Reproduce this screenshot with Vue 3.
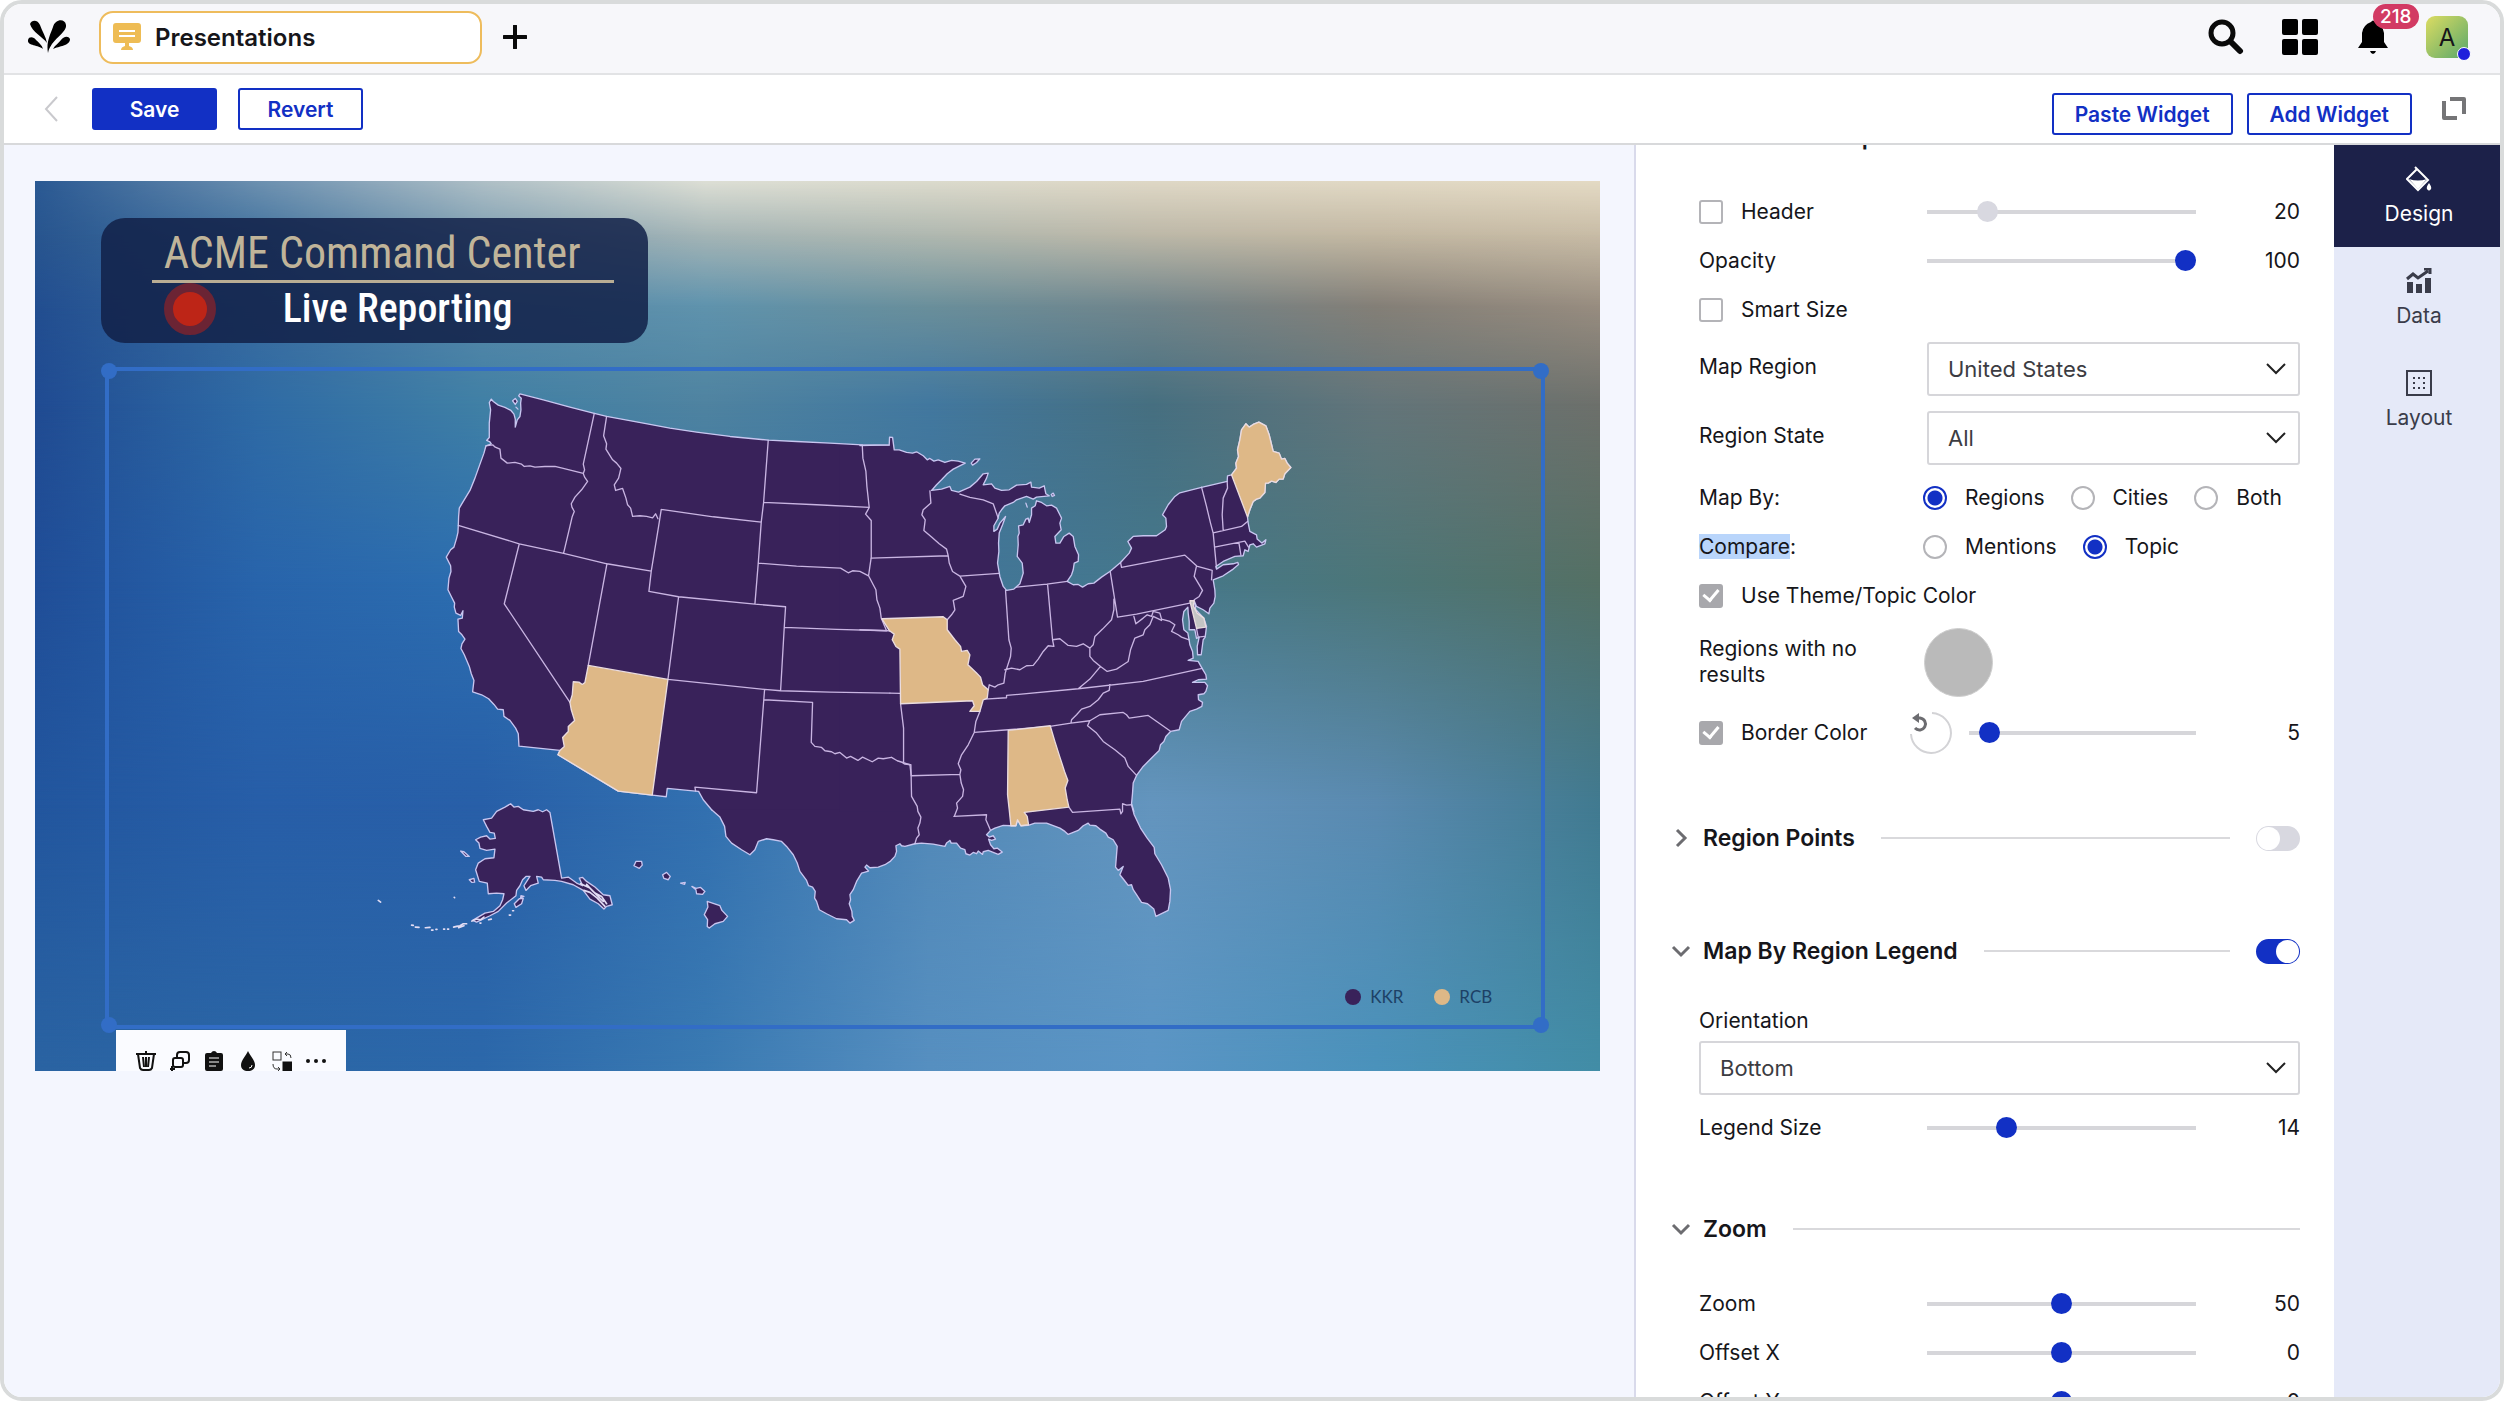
<script setup>
import { ref, computed } from 'vue'

// === top bar ===
const tabName = ref('Presentations')
const notifCount = ref(218)

// === side tabs ===
const activeTab = ref('Design')
const sideTabs = ['Design', 'Data', 'Layout']

// === settings ===
const header = ref(false)
const headerSize = ref(20)
const opacity = ref(100)
const smartSize = ref(false)
const mapRegion = ref('United States')
const regionState = ref('All')
const mapBy = ref('Regions')
const compare = ref('Topic')
const useTheme = ref(true)
const borderColor = ref(true)
const borderSize = ref(5)
const regionPoints = ref(false)
const regionLegend = ref(true)
const orientation = ref('Bottom')
const legendSize = ref(14)
const zoomRows = ref([
  { id: 'zoom', label: 'Zoom', value: 50, min: 0, max: 100 },
  { id: 'offset-x', label: 'Offset X', value: 0, min: -100, max: 100 },
  { id: 'offset-y', label: 'Offset Y', value: 0, min: -100, max: 100 },
])

// === backdrop: every row fades into the next one ===
const backdropRows = [
  { y: 0, colors: ['#2a5993', '#6c90b0', '#aebfc6', '#dddfd5', '#dcdbcd', '#dfd8c6', '#e1d9c5', '#e4dac4'] },
  { y: 6, colors: ['#28558f', '#45759f', '#7f9fb2', '#a5b5b6', '#b0b8b0', '#bdb8a8', '#c3b8a3', '#c8bca6'] },
  { y: 14, colors: ['#224e90', '#3a6c9e', '#5787a8', '#5f93ad', '#6a8f9b', '#71858b', '#847f77', '#988d80'] },
  { y: 25, colors: ['#204b92', '#2f6ba5', '#4080a5', '#4f83a0', '#42789f', '#466f80', '#63757a', '#6d706b'] },
  { y: 45, colors: ['#204e98', '#2864ab', '#2c6eb0', '#3474a8', '#41759a', '#45788c', '#4c7678', '#547064'] },
  { y: 70, colors: ['#22569e', '#275ea8', '#285fa8', '#3270b0', '#5289b8', '#6495be', '#5a8ab0', '#417a90'] },
  { y: 100, colors: ['#2a63a2', '#2b66a5', '#2c68aa', '#3a7ab2', '#568fc0', '#5a95c5', '#4a92bb', '#428da6'] },
]
const backdrop = computed(() =>
  backdropRows.map((row, i) => ({
    background: `linear-gradient(to right, ${row.colors.join(', ')})`,
    maskImage: i === 0
      ? 'none'
      : `linear-gradient(to bottom, transparent ${backdropRows[i - 1].y}%, #000 ${row.y}%)`,
  }))
)

// === map ===
const legend = [
  { name: 'KKR', color: '#39225a' },
  { name: 'RCB', color: '#deb887' },
]

const westCoast = 'M845 1320 820 1290 806 1265 797 1264 712 1256 709 1281 667 1276 565 1264 384 1155 390 1142 267 1129 265 1092 257 1075 240 1052 222 1040 220 1020 203 1018 192 1004 176 987 155 975 128 966 132 932 124 912 118 890 103 855 93 836 96 822 105 808 96 795 86 785 84 748 97 745 99 723 92 737 78 730 73 712 74 700 64 680 54 660 57 625 63 605 62 588 49 562 62 540 72 532 80 505 84 488 85 467 86 440 88 415 100 395 120 362 135 325 150 283 162 250 168 228 184 222 180 216 170 212 178 203 178 160 182 120 178 98 184 88 190 95 205 106 225 113 243 122 252 133 256 148 256 172 262 150 270 140 273 120 272 100 274 85 266 78 270 72 340 90 420 112 493 131 530 140 640 160 720 175 800 187 900 200 1015 211 1100 215 1200 220 1297 225 1378 226'
const eastCoast = 'M0 137 88 135 89 112 98 113 103 150 118 150 140 158 158 160 170 156 190 168 202 180 210 176 222 184 235 180 255 188 275 182 295 184 316 190 280 208 262 222 245 240 230 255 215 272 245 268 270 260 275 272 296 277 330 262 350 245 370 222 385 220 380 235 370 255 395 252 405 265 425 272 448 270 470 256 500 254 513 247 515 262 538 265 553 258 558 282 568 288 530 292 520 298 500 290 470 300 460 308 435 318 425 330 418 340 414 357 402 378 402 395 412 388 420 370 437 350 428 375 418 400 416 430 417 455 413 490 420 530 430 560 440 572 462 568 480 552 490 520 487 490 472 470 475 435 474 410 478 400 476 378 490 375 498 358 505 355 508 368 515 345 515 325 526 318 530 303 545 308 560 318 575 316 590 325 600 345 605 355 600 370 604 390 585 410 588 430 600 430 612 410 628 400 640 410 645 440 656 465 655 485 643 490 640 510 635 525 622 545 640 555 655 554 668 562 685 552 702 550 725 532 750 515 782 488 808 460 815 445 804 425 820 410 850 408 890 408 916 390 920 380 918 355 908 345 925 315 945 290 960 279 1025 263 1102 245 1103 228 1115 225 1130 205 1128 190 1136 170 1133 150 1140 120 1145 90 1158 72 1168 82 1180 74 1197 67 1218 78 1228 105 1240 155 1258 160 1265 178 1275 176 1282 190 1293 203 1275 222 1270 238 1258 238 1248 248 1235 244 1225 250 1217 250 1215 278 1200 295 1190 298 1180 305 1170 330 1163 352 1165 370 1170 395 1190 405 1192 418 1206 430 1218 420 1215 432 1190 442 1180 432 1170 435 1165 455 1155 450 1150 468 1125 470 1090 485 1068 500 1070 508 1090 495 1120 492 1134 488 1136 494 1120 508 1090 528 1060 540 1065 570 1066 590 1062 610 1050 625 1047 642 1030 630 1010 620 1003 603 1008 630 1032 655 1040 680 1036 712 1030 720 1024 765 1013 765 1012 740 1018 712 1010 716 1005 690 988 690 988 665 985 640 984 622 972 635 968 660 972 690 984 700 988 722 990 735 998 755 1000 775 985 782 1015 785 1028 808 1038 825 1040 838 1015 840 998 848 1035 848 1043 858 1038 875 1032 882 1015 885 1016 900 1028 908 1026 920 1010 928 990 935 965 965 958 990 932 995 918 1010 912 1025 902 1035 898 1052 885 1065 870 1080 850 1100 830 1127 820 1150 818 1180 815 1212 822 1235'
const southCoast = 'M1235 315 1243 345 1262 385 1282 415 1303 443 1305 462 1325 495 1345 535 1352 570 1350 605 1345 632 1308 650 1302 628 1283 612 1265 608 1250 585 1240 570 1235 555 1225 557 1212 540 1200 525 1210 500 1195 512 1187 502 1188 490 1192 440 1180 420 1165 412 1158 400 1140 388 1128 378 1110 376 1105 370 1090 378 1075 392 1045 404 1035 395 1020 385 980 370 945 370 925 377 903 378 893 360 888 378 873 378 850 377 825 385 812 392 800 405 808 412 820 408 827 418 815 422 806 418 812 435 822 447 832 445 847 457 835 464 805 452 790 456 788 464 775 454 770 462 760 458 750 466 738 462 735 450 722 445 710 430 694 430 690 422 680 430 675 440 640 433 605 430 585 432 555 440 545 438 540 432 528 438 530 455 525 470 512 484 495 495 475 502 450 504 440 496 435 502 446 514 425 520 410 545 400 570 390 585 392 600 388 612 396 635 397 650 403 662 390 670 380 660 350 657 320 642 298 630 290 605 284 595 286 575 278 562 266 558 260 542 240 515 232 490 220 465 200 440 185 425 160 420 140 417 115 425 105 450 90 465 65 450 35 430 18 410 14 380 0 352 -25 330'

// one sheet per corner of the country, x/y is where the sheet starts
const sheets = [
  {
    name: 'south', x: 870, y: 990,
    land: southCoast + ' -50 300 -50 0 1230 0Z',
    coast: southCoast,
    borders: 'M550 190 555 193 573 195 575 290 592 320 594 335 603 352 600 370 594 385 598 405 590 415 585 432M702 350 800 345 798 360 806 378 812 392M1047 322 1058 338 1200 328 1203 342 1208 335 1208 312 1220 316 1235 315',
  },
  {
    name: 'west', x: 0, y: 0,
    land: westCoast + ' 1378 1320Z',
    coast: westCoast,
    borders: 'M168 228 188 225 196 232 210 238 213 265 232 280 255 278 275 283 283 290 300 288 315 292 345 290 375 290 400 296 460 311M493 131 460 283 464 300 460 311 464 322 473 335 455 360 435 382 424 402 426 412 433 425 427 440 420 470 401 550M530 140 521 198 530 222 528 238 548 270 560 280 573 296 566 325 553 345 557 362 578 356 588 385 593 405 602 415 608 440 630 438 650 440 668 444 677 432 684 447M694 419 686 470 664 604 657 665 746 681 975 703 1067 711 1063 773 1052 963M85 467 268 522 401 551 531 582 664 604M268 522 223 702 420 998M531 582 475 887M746 681 714 929M714 929 1004 959 1052 963 1200 967 1380 970M694 419 850 441 994 457M1015 211 1001 398 994 457 985 580 975 703M1001 398 1160 405 1318 413M985 580 1100 589 1232 595 1255 609 1268 603 1290 605 1316 618M1063 773 1220 779 1370 783M1297 225 1299 265 1308 305 1311 350 1318 413 1307 433 1324 452 1324 563 1320 590 1316 618 1330 645 1338 660 1341 690 1350 715 1354 745 1370 783M1004 959 980 1269 795 1252 797 1264M1003 990 1148 998 1144 1118 1155 1130 1175 1133 1185 1143 1205 1146 1215 1152 1230 1148 1250 1165 1262 1160 1284 1172 1298 1162 1327 1176 1345 1165 1360 1167 1385 1163',
  },
  {
    name: 'east', x: 1290, y: 90,
    land: eastCoast + ' -60 1235 -60 137Z',
    coast: eastCoast,
    borders: 'M210 273 213 310 190 330 186 345 196 360 192 392 215 412 238 432 260 448 265 468 268 490 278 515 300 529 318 560 310 590 280 602 285 630 275 645 262 660M34 475 265 468M300 529 418 521M78 692 90 694M0 690 85 693M90 880 120 881M122 912 131 985 131 1090M95 1073 112 1083 131 1089 150 1095 154 1128 300 1124M360 935 348 965 343 998 325 1035 305 1065 295 1092 303 1110 300 1124 304 1150 311 1170 308 1190 290 1210 293 1225 284 1248M385 870 388 855 405 862 415 855 432 850 436 820 452 770 454 745 447 720 437 572M435 810 455 805 480 810 500 798 520 797 535 778 550 755 565 738 582 740 578 720 563 553M470 562 561 553 622 545M578 720 600 717 625 737 650 740 670 732 690 745 700 735 705 710 728 688 755 660 762 630 762 598M751 515 773 652 830 643 990 610M690 745 690 770 700 782 722 800 690 838 655 867M375 898 440 894 440 887 655 867 850 845 1027 806M750 855 748 872 730 880 715 900 690 920 665 928 650 945 635 960 633 970M343 998 445 990 570 980 633 970 690 963M722 800 742 815 770 808 790 795 805 785 812 750 825 715 850 705 855 690 870 675 880 650 905 662M822 650 828 672 850 655 862 645 875 650 880 635 900 640 905 658 930 665 945 675 935 695 955 705 965 712 988 720M782 488 785 503 975 466 990 480 1010 498 1003 530 1028 572 1018 590 1003 600M1013 500 1057 512 1055 540M1025 262 1040 320 1052 370 1060 400 1070 505M1102 245 1103 265 1090 295 1087 345 1090 392M1060 399 1145 380 1163 365M1064 442 1140 427 1155 424 1166 442M1137 428 1143 465M300 283 330 293 370 300 400 312 408 335 415 355M690 963 683 978 710 1000 730 1025 765 1050 795 1075 805 1100 830 1127M690 963 720 945 790 938 800 945 808 955 865 947 930 993M1010 686 1015 712 1034 710',
  },
]

const highlights = [
  { name: 'Arizona', x: 0, y: 0, color: '#deb887', d: 'M475 887 714 929 667 1276 565 1264 384 1155 390 1142 403 1130 398 1103 415 1085 415 1070 434 1052 424 1020 420 998 427 975 430 936 447 937 457 944 465 938Z' },
  { name: 'Missouri', x: 1290, y: 90, color: '#deb887', d: 'M66 657 250 651 262 660 262 690 285 720 302 740 305 755 322 752 330 765 324 795 350 820 362 832 368 855 385 870 382 895 370 900 360 935 330 935 343 918 338 903 122 912 120 748 108 740 97 720 103 703 88 692Z' },
  { name: 'Maine', x: 1290, y: 90, color: '#deb887', d: 'M1115 225 1130 205 1128 190 1136 170 1133 150 1140 120 1145 90 1158 72 1168 82 1180 74 1197 67 1218 78 1228 105 1240 155 1258 160 1265 178 1275 176 1282 190 1293 203 1275 222 1270 238 1258 238 1248 248 1235 244 1225 250 1217 250 1215 278 1200 295 1190 298 1180 305 1170 330 1163 352Z' },
  { name: 'Delaware', x: 1290, y: 90, color: '#c4c4c4', d: 'M990 603 1003 603 1000 618 1012 640 1032 655 1038 682 1010 686Z' },
  { name: 'Alabama', x: 870, y: 990, color: '#deb887', d: 'M865 92 991 78 1005 125 1020 172 1034 215 1044 242 1036 265 1042 300 1047 322 913 338 922 350 926 375 903 378 893 360 888 378 873 378 868 330 863 285Z' },
]

const alaska = 'M435 142 452 132 462 142 475 140 490 150 520 155 535 150 548 156 560 150 570 158 605 355 625 352 650 370 668 378 658 355 668 353 680 365 705 382 730 405 750 408 757 435 740 440 732 448 715 432 690 418 670 392 640 375 605 365 585 362 550 360 545 352 530 350 535 370 512 378 498 392 492 378 510 350 498 350 488 360 480 378 470 392 468 408 440 430 415 455 390 468 350 487 338 482 375 460 400 455 420 438 428 420 432 402 410 400 385 402 382 370 358 365 347 330 355 310 375 297 402 294 405 268 380 272 360 266 357 250 347 240 362 232 380 228 390 238 406 236 403 220 390 218 380 200 370 180 395 175 410 155Z'
const islands = 'M463 432 478 417 490 416 485 432 468 443ZM328 360 342 356 344 367 336 368ZM302 274 312 276 328 290 318 290ZM483 408 492 410 482 414ZM822 318 828 305 845 305 847 316 838 326ZM908 345 920 338 931 350 925 360 912 356ZM962 370 976 368 974 374ZM996 380 1008 386 1022 383 1035 395 1028 404 1010 402 1008 390ZM1042 425 1080 438 1086 452 1103 470 1090 485 1065 492 1048 505 1042 500 1043 480 1033 465 1044 442Z'
const channels = 'M662 372 690 385 705 400 725 410 740 432M672 392 690 398 712 415 735 440M680 374 700 396 730 425M55 422 62 427M155 496 160 497M166 502 177 503M196 504 210 503M215 511 219 511M228 509 231 509M251 508 254 508M263 508 266 508M281 502 290 500 300 498 310 492 320 492M296 504 312 498M336 484 350 478 362 480 372 472M386 480 394 478M448 466 452 466M458 453 461 453M283 413 284 414M360 490 363 490'
</script>

<template>
  <div class="app">
    <header class="topbar">
      <a href="#" class="logo" aria-label="Home">
        <svg viewBox="0 0 44 36" width="44" height="36">
          <path d="M3 5C5 0 11 1 13 6C15 12 19 18 20 24C16 18 5 13 3 5Z" />
          <path d="M26 8C28 0 38 -1 39 6C40 14 24 20 21 34C19 24 23 16 26 8Z" />
          <path d="M1 21C2 17 7 18 9 21C12 24 15 26 16 30C12 26 0 27 1 21Z" />
          <path d="M43 20C41 16 36 18 34 21C32 24 28 26 26 30C32 27 43 27 43 20Z" />
        </svg>
      </a>
      <button class="tab">
        <svg viewBox="0 0 28 28" width="28" height="28">
          <path d="M3 0H25Q28 0 28 3V17Q28 20 25 20H16V23Q20 24 20 27H8Q8 24 12 23V20H3Q0 20 0 17V3Q0 0 3 0Z" fill="#eebc54" />
          <path d="M6 8H22M6 13H22" stroke="#fff" stroke-width="2" />
        </svg>
        {{ tabName }}
      </button>
      <button class="plain plus" aria-label="New tab">
        <svg viewBox="0 0 24 24" width="24" height="24"><path d="M12 1V23M1 12H23" stroke="#0a0a0a" stroke-width="4" stroke-linecap="round" /></svg>
      </button>
      <nav class="top-icons">
        <button class="plain" aria-label="Search">
          <svg viewBox="0 0 36 36" width="36" height="36" fill="none" stroke="#0a0a0a" stroke-linecap="round">
            <circle cx="14" cy="14" r="11" stroke-width="5" /><path d="M23 23 32 32" stroke-width="6" />
          </svg>
        </button>
        <button class="plain" aria-label="Apps">
          <svg viewBox="0 0 36 36" width="36" height="36">
            <rect width="16" height="16" rx="2" /><rect x="20" width="16" height="16" rx="2" />
            <rect y="20" width="16" height="16" rx="2" /><rect x="20" y="20" width="16" height="16" rx="2" />
          </svg>
        </button>
        <button class="plain bell" aria-label="Notifications">
          <svg viewBox="0 0 30 34" width="30" height="34">
            <path d="M13 2Q15 -1 17 2Q25 5 26 13V22L30 28H0L4 22V13Q5 5 13 2ZM12 31H18Q17 34 15 34Q13 34 12 31Z" />
          </svg>
          <span class="badge">{{ notifCount }}</span>
        </button>
        <button class="avatar">A<span class="online"></span></button>
      </nav>
    </header>

    <div class="toolbar">
      <button class="plain back" aria-label="Back">
        <svg viewBox="0 0 14 26" width="14" height="26" fill="none" stroke="#c9c9cd" stroke-width="2"><path d="M13 1 2 13 13 25" /></svg>
      </button>
      <button class="btn primary">Save</button>
      <button class="btn">Revert</button>
      <div class="widget-actions">
        <button class="btn wide">Paste Widget</button>
        <button class="btn wide">Add Widget</button>
      </div>
      <button class="plain" aria-label="Expand">
        <svg viewBox="0 0 26 26" width="26" height="26" fill="none" stroke="#757577" stroke-width="4" stroke-linejoin="round"><path d="M9 3H23V18M3 5V22H16" /></svg>
      </button>
    </div>

    <div class="workspace">
      <main class="stage">
        <div class="canvas">
          <div v-for="(layer, i) in backdrop" :key="i" class="backdrop" :style="layer"></div>

          <div class="title-card">
            <h1>ACME Command Center</h1>
            <div class="live">
              <span class="dot"></span>
              <h2>Live Reporting</h2>
            </div>
          </div>

          <div class="map-widget">
            <svg class="map" viewBox="-963 9 4296 1951" role="img" aria-label="Map of the United States">
              <g v-for="s in sheets" :key="s.name" :transform="`translate(${s.x} ${s.y})`">
                <path :d="s.land" class="land" />
              </g>
              <g v-for="s in sheets" :key="s.name + '-lines'" :transform="`translate(${s.x} ${s.y})`">
                <path :d="s.borders" class="border-line" />
                <path :d="s.coast" class="coast-line" />
              </g>
              <path
                v-for="h in highlights"
                :key="h.name"
                :d="h.d"
                :fill="h.color"
                :transform="`translate(${h.x} ${h.y})`"
                class="state"
              />
              <path d="M248 93 256 86 262 95 256 104ZM258 112 264 118" class="isle" />
              <path d="M334 190 345 178 360 177 350 188 338 196ZM498 310 502 322M574 284 580 280 584 287 577 290Z" transform="translate(1290 90)" class="isle" />
              <g transform="translate(-210 1170)">
                <path :d="alaska" class="isle" />
                <path :d="islands" class="isle" />
                <path :d="channels" class="channel" />
              </g>
            </svg>
            <ul class="legend">
              <li v-for="item in legend" :key="item.name">
                <svg viewBox="0 0 16 16" width="16" height="16"><circle cx="8" cy="8" r="8" :fill="item.color" /></svg>
                {{ item.name }}
              </li>
            </ul>
            <span class="handle tl"></span>
            <span class="handle tr"></span>
            <span class="handle bl"></span>
            <span class="handle br"></span>
          </div>

          <div class="widget-menu">
            <button class="plain" aria-label="Delete">
              <svg viewBox="0 0 20 20" width="20" height="20" fill="none" stroke="#111" stroke-width="2"><path d="M0 3H20M10 0V3M2 3 4 17Q5 19 7 19H13Q15 19 16 17L18 3M7 6 8 16M10 6V16M13 6 12 16" /></svg>
            </button>
            <button class="plain" aria-label="Duplicate">
              <svg viewBox="0 0 20 20" width="20" height="20" fill="none" stroke="#111" stroke-width="2"><path d="M7 6V4Q7 1 10 1H16Q19 1 19 4V9Q19 12 16 12H14" /><rect x="3" y="7" width="10" height="9" rx="2" /><path d="M2 15V20M0 18H5" /></svg>
            </button>
            <button class="plain" aria-label="Copy">
              <svg viewBox="0 0 20 20" width="20" height="20"><path d="M3 2H7Q8 0 10 0Q12 0 13 2H17Q19 2 19 4V18Q19 20 17 20H3Q1 20 1 18V4Q1 2 3 2Z" fill="#111" /><path d="M5 7H15M5 11H15M5 15H12" stroke="#fff" /></svg>
            </button>
            <button class="plain" aria-label="Color">
              <svg viewBox="0 0 20 20" width="20" height="20"><path d="M10 0C12 5 17 9 17 14C17 18 14 20 10 20C6 20 3 18 3 14C3 9 8 5 10 0Z" fill="#111" /><path d="M14 14Q14 17 11 17" stroke="#fff" fill="none" /></svg>
            </button>
            <button class="plain" aria-label="Swap">
              <svg viewBox="0 0 20 20" width="20" height="20" fill="none" stroke="#333"><rect x="1" y="1" width="8" height="8" /><rect x="11" y="11" width="9" height="9" fill="#111" stroke="#111" /><path d="M13 3H16Q19 3 19 7M15 1 13 3 15 5M1 13Q1 18 5 18H8M6 16 8 18 6 20" /></svg>
            </button>
            <button class="plain" aria-label="More">
              <svg viewBox="0 0 20 20" width="20" height="20" fill="#111"><circle cx="2" cy="10" r="2" /><circle cx="10" cy="10" r="2" /><circle cx="18" cy="10" r="2" /></svg>
            </button>
          </div>
        </div>
      </main>

      <aside class="panel">
        <section class="section first">
          <h3 class="section-head">Customize Map</h3>
          <div class="row">
            <label class="check"><input type="checkbox" v-model="header" />Header</label>
            <input type="range" v-model="headerSize" min="0" max="100" aria-label="Header size" class="muted" />
            <output>{{ headerSize }}</output>
          </div>
          <div class="row">
            <label for="opacity">Opacity</label>
            <input id="opacity" type="range" v-model="opacity" min="0" max="100" />
            <output>{{ opacity }}</output>
          </div>
          <div class="row">
            <label class="check"><input type="checkbox" v-model="smartSize" />Smart Size</label>
          </div>
          <div class="row select-row">
            <label for="map-region">Map Region</label>
            <div class="select">
              <select id="map-region" v-model="mapRegion"><option>United States</option></select>
              <svg viewBox="0 0 20 12" width="20" height="12"><path d="M1 1 10 10 19 1" /></svg>
            </div>
          </div>
          <div class="row select-row">
            <label for="region-state">Region State</label>
            <div class="select">
              <select id="region-state" v-model="regionState"><option>All</option></select>
              <svg viewBox="0 0 20 12" width="20" height="12"><path d="M1 1 10 10 19 1" /></svg>
            </div>
          </div>
          <div class="row radio-row">
            <span>Map By:</span>
            <div class="radios">
              <label v-for="opt in ['Regions', 'Cities', 'Both']" :key="opt">
                <input type="radio" name="map-by" :value="opt" v-model="mapBy" />{{ opt }}
              </label>
            </div>
          </div>
          <div class="row radio-row">
            <span><mark>Compare</mark>:</span>
            <div class="radios">
              <label v-for="opt in ['Mentions', 'Topic']" :key="opt">
                <input type="radio" name="compare" :value="opt" v-model="compare" />{{ opt }}
              </label>
            </div>
          </div>
          <div class="row">
            <label class="check full"><input type="checkbox" v-model="useTheme" />Use Theme/Topic Color</label>
          </div>
          <div class="row swatch-row">
            <span class="two-line">Regions with no results</span>
            <button class="swatch" aria-label="Regions with no results color"></button>
          </div>
          <div class="row border-row">
            <label class="check"><input type="checkbox" v-model="borderColor" />Border Color</label>
            <div class="border-size">
              <button class="plain" aria-label="Reset border color">
                <svg viewBox="0 0 42 42" width="42" height="42" fill="none">
                  <path d="M22 1A20 20 0 1 1 1 22" stroke="#d3d3d6" stroke-width="2" />
                  <path d="M5 6H10A6 6 0 1 1 5 16" stroke="#6c6c70" stroke-width="3" />
                  <path d="M9 1V11L2 6Z" fill="#6c6c70" />
                </svg>
              </button>
              <input type="range" v-model="borderSize" min="0" max="100" aria-label="Border size" />
            </div>
            <output>{{ borderSize }}</output>
          </div>
        </section>

        <section class="section closed">
          <h3 class="section-head">
            <svg viewBox="0 0 16 20" width="16" height="20"><path d="M4 2 12 10 4 18" /></svg>
            Region Points
            <span class="rule"></span>
            <input type="checkbox" class="switch" v-model="regionPoints" aria-label="Region Points" />
          </h3>
        </section>

        <section class="section">
          <h3 class="section-head">
            <svg viewBox="0 0 16 20" width="16" height="20"><path d="M0 6 8 14 16 6" /></svg>
            Map By Region Legend
            <span class="rule"></span>
            <input type="checkbox" class="switch" v-model="regionLegend" aria-label="Map By Region Legend" />
          </h3>
          <label for="orientation" class="stacked">Orientation</label>
          <div class="select">
            <select id="orientation" v-model="orientation"><option>Bottom</option></select>
            <svg viewBox="0 0 20 12" width="20" height="12"><path d="M1 1 10 10 19 1" /></svg>
          </div>
          <div class="row after-select">
            <label for="legend-size">Legend Size</label>
            <input id="legend-size" type="range" v-model="legendSize" min="0" max="50" />
            <output>{{ legendSize }}</output>
          </div>
        </section>

        <section class="section">
          <h3 class="section-head">
            <svg viewBox="0 0 16 20" width="16" height="20"><path d="M0 6 8 14 16 6" /></svg>
            Zoom
            <span class="rule long"></span>
          </h3>
          <div v-for="row in zoomRows" :key="row.id" class="row">
            <label :for="row.id">{{ row.label }}</label>
            <input :id="row.id" type="range" v-model="row.value" :min="row.min" :max="row.max" />
            <output>{{ row.value }}</output>
          </div>
        </section>
      </aside>

      <nav class="side-tabs">
        <button
          v-for="tab in sideTabs"
          :key="tab"
          :class="{ active: activeTab === tab }"
          @click="activeTab = tab"
        >
          <svg v-if="tab === 'Design'" viewBox="0 0 26 26" width="26" height="26">
            <path d="M9 1 22 14 12 24 1 13 11 3" fill="none" stroke="currentColor" stroke-width="2" />
            <path d="M3 13Q12 16 21 13L12 23Z" fill="currentColor" />
            <path d="M23 17Q26 21 25 23Q23 26 21 23Q20 21 23 17Z" fill="currentColor" />
          </svg>
          <svg v-else-if="tab === 'Data'" viewBox="0 0 26 26" width="26" height="26">
            <path d="M1 14H7V25H1ZM10 16H16V25H10ZM19 10H25V25H19Z" fill="currentColor" />
            <path d="M1 11 7 6 12 10 22 3M18 1H24V6" fill="none" stroke="currentColor" stroke-width="3" />
          </svg>
          <svg v-else viewBox="0 0 26 26" width="26" height="26" fill="none" stroke="currentColor">
            <rect x="1" y="1" width="24" height="24" stroke-width="2" />
            <path d="M7 8H20M7 18H20M8 7V20M18 7V20" stroke-width="2" stroke-dasharray="2 3" />
          </svg>
          {{ tab }}
        </button>
      </nav>
    </div>
  </div>
</template>

<style>
body {
  background: #fff;
}
</style>

<style scoped>
* {
  box-sizing: border-box;
}
.app {
  height: 100vh;
  display: flex;
  flex-direction: column;
  border: 4px solid #d9dbdb;
  border-radius: 22px;
  overflow: hidden;
  background: #fff;
  font-family: Inter, "Liberation Sans", sans-serif;
  font-size: 21px;
  color: #16161a;
}
button {
  font: inherit;
  color: inherit;
  cursor: pointer;
}
.plain {
  display: block;
  padding: 0;
  border: none;
  background: none;
}
svg {
  display: block;
}

/* top bar */
.topbar {
  display: flex;
  align-items: center;
  height: 71px;
  padding: 0 32px 3px 23px;
  background: #f7f7fa;
  border-bottom: 2px solid #e2e3e5;
  flex-shrink: 0;
}
.tab {
  display: flex;
  align-items: center;
  gap: 14px;
  width: 383px;
  height: 53px;
  margin: 0 21px 0 28px;
  padding: 0 12px;
  border: 2px solid #eebc5c;
  border-radius: 14px;
  background: #fff;
  font-size: 24px;
  font-weight: 600;
}
.top-icons {
  display: flex;
  align-items: center;
  margin-left: auto;
  gap: 38px;
}
.bell {
  position: relative;
  margin-left: 2px;
}
.badge {
  position: absolute;
  left: 15px;
  top: -16px;
  padding: 0 7px;
  border-radius: 13px;
  background: #d23a63;
  color: #fff;
  font-size: 19px;
  line-height: 25px;
  font-weight: 500;
}
.avatar {
  position: relative;
  width: 42px;
  height: 42px;
  padding: 0;
  border: none;
  border-radius: 9px;
  background: linear-gradient(135deg, #dcdc62, #5aa86a);
  font-size: 24px;
}
.online {
  position: absolute;
  right: -3px;
  bottom: -3px;
  width: 14px;
  height: 14px;
  border: 1px solid #fff;
  border-radius: 50%;
  background: #1f1fdb;
}

/* toolbar */
.toolbar {
  display: flex;
  align-items: center;
  height: 70px;
  padding: 0 33px 0 40px;
  border-bottom: 2px solid #d8d9db;
  flex-shrink: 0;
}
.back {
  margin-right: 34px;
}
.btn {
  width: 125px;
  height: 42px;
  margin-right: 21px;
  padding: 0;
  border: 2px solid #1230c4;
  border-radius: 3px;
  background: #fff;
  color: #1230c4;
  font-weight: 600;
}
.btn.primary {
  background: #1230c4;
  color: #fff;
}
.btn.wide {
  width: auto;
  margin: 0;
  padding: 0 21px;
}
.widget-actions {
  display: flex;
  gap: 14px;
  margin-left: auto;
  margin-right: 29px;
  padding-top: 10px;
}

/* workspace */
.workspace {
  display: flex;
  flex: 1;
  min-height: 0;
}
.stage {
  flex: 1;
  min-width: 0;
  padding: 36px 34px 0 31px;
  background: #f4f6fe;
}
.canvas {
  position: relative;
  aspect-ratio: 1564 / 889;
  overflow: hidden;
}
.backdrop {
  position: absolute;
  inset: 0;
}
.title-card {
  position: absolute;
  left: 4.2%;
  top: 4.2%;
  width: 35%;
  height: 14%;
  padding: 8px 34px 0 51px;
  border-radius: 24px;
  background: rgba(17, 33, 72, 0.86);
  font-family: "Roboto Condensed", Roboto, sans-serif;
}
.title-card h1 {
  margin: 0;
  padding-left: 12px;
  border-bottom: 3px solid #b9ad94;
  color: #c0b499;
  font-size: 44px;
  line-height: 54px;
  font-weight: 400;
  white-space: nowrap;
}
.live {
  display: flex;
  align-items: center;
}
.dot {
  width: 52px;
  height: 52px;
  margin-left: 12px;
  border: 9px solid #6b2434;
  border-radius: 50%;
  background: #bd2517;
}
.live h2 {
  margin: 0 0 0 67px;
  color: #fff;
  font-size: 40px;
  line-height: 52px;
  font-weight: 500;
}
.map-widget {
  position: absolute;
  left: 4.5%;
  right: 3.5%;
  top: 20.9%;
  bottom: 4.7%;
  border: 4px solid #326dc6;
}
.map {
  width: 100%;
  height: 100%;
}
.land {
  fill: #39225a;
}
.border-line,
.coast-line,
.state,
.isle,
.channel {
  stroke: #c9b5e2;
  stroke-width: 4px;
  stroke-linejoin: round;
  stroke-linecap: round;
}
.border-line,
.coast-line,
.channel {
  fill: none;
}
.coast-line,
.isle {
  stroke: #c8c6f0;
}
.isle {
  fill: #39225a;
}
.state {
  stroke: #eadcdf;
}
.channel {
  stroke: #e2dcf4;
  stroke-width: 5px;
}
.legend {
  position: absolute;
  right: 49px;
  bottom: 16px;
  display: flex;
  gap: 31px;
  margin: 0;
  padding: 0;
  list-style: none;
  color: #1d4166;
  font-family: Lato, sans-serif;
  font-size: 17px;
  line-height: 24px;
}
.legend li {
  display: flex;
  align-items: center;
  gap: 9px;
}
.handle {
  position: absolute;
  width: 16px;
  height: 16px;
  border-radius: 50%;
  background: #326dc6;
}
.tl,
.tr {
  top: -8px;
}
.bl,
.br {
  bottom: -8px;
}
.tl,
.bl {
  left: -8px;
}
.tr,
.br {
  right: -8px;
}
.widget-menu {
  position: absolute;
  left: 5.2%;
  bottom: 0;
  display: flex;
  gap: 14px;
  padding: 21px 20px 0 20px;
  background: #fafbff;
}

/* settings panel */
.panel {
  width: 700px;
  padding: 0 34px 0 63px;
  border-left: 2px solid #d9daeb;
  overflow: hidden;
  flex-shrink: 0;
}
.section {
  margin-bottom: 61px;
}
.section.first {
  margin-top: -24px;
}
.section.closed {
  margin-bottom: 81px;
}
.closed .section-head {
  margin-bottom: 0;
}
.section-head {
  display: flex;
  align-items: center;
  height: 32px;
  margin: 0 0 34px 4px;
  font-size: 23px;
  font-weight: 600;
}
.section-head svg {
  margin: 0 14px 0 -30px;
  fill: none;
  stroke: #6c6c70;
  stroke-width: 3px;
  overflow: visible;
}
.rule {
  flex: 1;
  height: 2px;
  margin: 0 26px;
  background: #d9d9dc;
}
.rule.long {
  margin-right: 0;
}
.row {
  display: grid;
  grid-template-columns: 228px 1fr 104px;
  align-items: center;
  min-height: 49px;
}
output {
  text-align: right;
}
.check {
  display: flex;
  align-items: center;
  gap: 18px;
  white-space: nowrap;
}
.check.full {
  grid-column: 1 / 4;
}
input[type='checkbox'],
input[type='radio'],
input[type='range'] {
  appearance: none;
  margin: 0;
}
.check input {
  width: 24px;
  height: 24px;
  border: 2px solid #b4b4b8;
  border-radius: 3px;
}
.check input:checked {
  display: grid;
  place-items: center;
  border-color: #a8a8ac;
  background: #a8a8ac;
}
.check input:checked::before {
  content: '';
  width: 7px;
  height: 12px;
  margin-bottom: 4px;
  border: solid #fff;
  border-width: 0 3px 3px 0;
  transform: rotate(40deg);
}
input[type='range'] {
  width: 100%;
  height: 21px;
  background: linear-gradient(#d6d6da, #d6d6da) center / 100% 4px no-repeat;
}
input[type='range']::-webkit-slider-thumb {
  appearance: none;
  width: 21px;
  height: 21px;
  border-radius: 50%;
  background: #1230c4;
}
input.muted::-webkit-slider-thumb {
  background: #d8d8e0;
}
.select-row {
  grid-template-columns: 228px 1fr;
  margin: 8px 0 15px;
}
.select-row + .select-row {
  margin-top: 0;
  margin-bottom: 8px;
}
.select-row label {
  padding-bottom: 6px;
}
.select {
  position: relative;
}
.select select {
  display: block;
  appearance: none;
  width: 100%;
  height: 54px;
  padding: 0 19px;
  border: 2px solid #d6d6da;
  border-radius: 3px;
  background: #fff;
  color: #3c3c42;
  font: inherit;
  font-size: 22px;
}
.select svg {
  position: absolute;
  right: 14px;
  top: 21px;
  fill: none;
  stroke: #222;
  stroke-width: 2px;
  pointer-events: none;
}
.radio-row {
  grid-template-columns: 224px 1fr;
}
.radios {
  display: flex;
  gap: 26px;
}
.radios label {
  display: flex;
  align-items: center;
  gap: 18px;
}
.radios input {
  width: 24px;
  height: 24px;
  border: 2px solid #b4b4b8;
  border-radius: 50%;
}
.radios input:checked {
  border-color: #1230c4;
  background: radial-gradient(circle, #1230c4 7px, #fff 8px);
}
mark {
  background: #b9d5fb;
  color: inherit;
}
.swatch-row {
  grid-template-columns: 225px 1fr;
  min-height: 84px;
}
.two-line {
  width: 170px;
  line-height: 26px;
}
.swatch {
  width: 69px;
  height: 69px;
  padding: 0;
  border: 1px solid #cfcfcf;
  border-radius: 50%;
  background: #bababa;
}
.border-row {
  grid-template-columns: 211px 1fr 104px;
  min-height: 57px;
}
.border-size {
  display: flex;
  align-items: center;
  gap: 17px;
}
.switch {
  width: 44px;
  height: 25px;
  padding: 1px;
  border-radius: 13px;
  background: #d8d8e0;
}
.switch::before {
  content: '';
  display: block;
  width: 23px;
  height: 23px;
  border-radius: 50%;
  background: #fff;
}
.switch:checked {
  background: #1230c4;
}
.switch:checked::before {
  margin-left: auto;
}
.stacked {
  display: block;
  line-height: 40px;
}
.after-select {
  margin-top: 8px;
}

/* side tabs */
.side-tabs {
  width: 166px;
  background: #e5e9f8;
  flex-shrink: 0;
}
.side-tabs button {
  display: flex;
  flex-direction: column;
  align-items: center;
  gap: 9px;
  width: 100%;
  height: 102px;
  padding: 21px 0 0 4px;
  border: none;
  background: none;
  color: #3a3c4a;
}
.side-tabs button.active {
  background: #1c2149;
  color: #fff;
}
</style>
